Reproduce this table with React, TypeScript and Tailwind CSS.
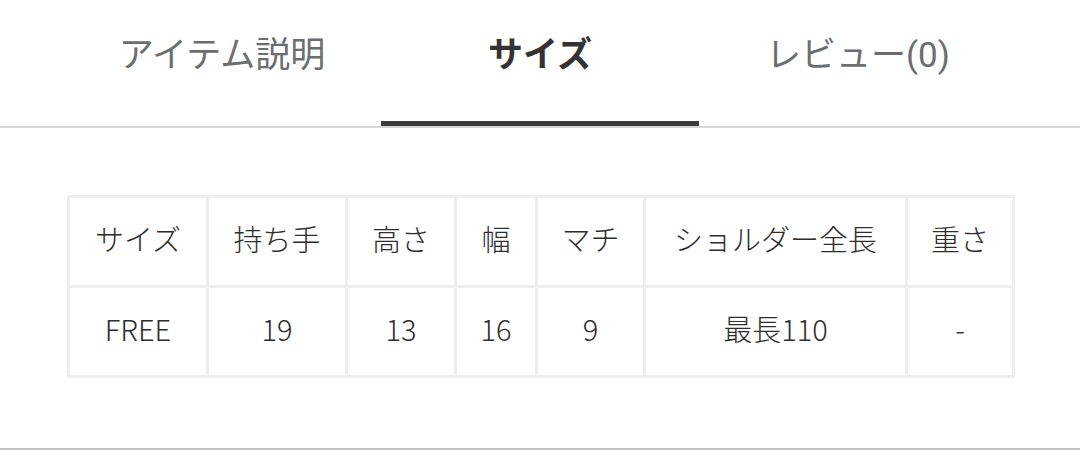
const tabs = [
  { label: 'アイテム説明', active: false },
  { label: 'サイズ', active: true },
  { label: 'レビュー(0)', active: false },
]

const headers = ['サイズ', '持ち手', '高さ', '幅', 'マチ', 'ショルダー全長', '重さ']
const values = ['FREE', '19', '13', '16', '9', '最長110', '-']
const widths = ['w-[139px]', 'w-[139px]', 'w-[109px]', 'w-[81px]', 'w-[108px]', 'w-[262px]', 'w-[107px]']

export default function App() {
  return (
    <div className="w-[1080px] h-[450px] bg-white overflow-hidden font-['Roboto','Noto_Sans_CJK_JP',sans-serif]">
      {/* Tabs */}
      <div className="border-b-2 border-[#d6d6d6]">
        <div className="w-[954px] mx-auto flex">
          {tabs.map((t) => (
            <div key={t.label} className="w-[318px] h-[126px] flex flex-col">
              <div
                className={
                  'flex-1 flex items-center justify-center pb-[8px] text-[35px] ' +
                  (t.active ? 'font-bold text-[#333333]' : 'text-[#6b6e70]')
                }
              >
                {t.label}
              </div>
              <div className={t.active ? 'h-[5px] bg-[#3a3d40]' : 'h-[5px]'} />
            </div>
          ))}
        </div>
      </div>

      {/* Size table */}
      <div className="pt-[67px] pl-[67px] h-[322px] border-b-2 border-[#c4c4c4] box-border">
        <table className="border-collapse font-['Noto_Sans_CJK_JP',sans-serif] font-light text-[29px] text-[#2e2e2e]">
          <tbody>
            <tr>
              {headers.map((h, i) => (
                <td key={h} className={'border-[3px] border-[#eeeeee] h-[90px] pb-[5px] text-center ' + widths[i]}>
                  {h}
                </td>
              ))}
            </tr>
            <tr>
              {values.map((v, i) => (
                <td key={i} className={'border-[3px] border-[#eeeeee] h-[90px] pb-[5px] text-center ' + widths[i]}>
                  {v}
                </td>
              ))}
            </tr>
          </tbody>
        </table>
      </div>
    </div>
  )
}
